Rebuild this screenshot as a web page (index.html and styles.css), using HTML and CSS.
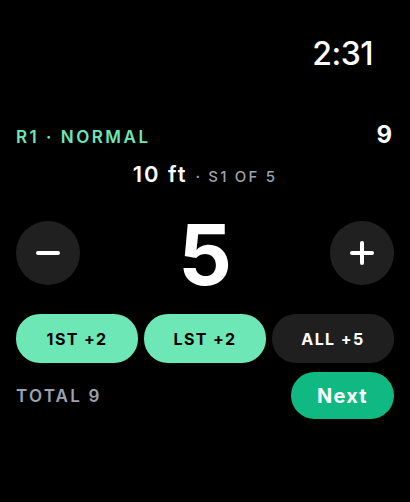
FILE: index.html
```html
<!DOCTYPE html>
<html lang="en">
<head>
<meta charset="utf-8">
<title>Round</title>
<link rel="stylesheet" href="styles.css">
</head>
<body>
<main class="screen">
  <header class="status">
    <span class="time">2:31</span>
  </header>

  <section class="round-row">
    <span class="round-label">R1 · NORMAL</span>
    <span class="round-score">9</span>
  </section>

  <section class="target-row">
    <span class="distance">10 ft</span>
    <span class="set-info"><span class="sep">·</span>S1 OF 5</span>
  </section>

  <section class="stepper">
    <button class="step-btn" aria-label="Decrease">
      <svg width="24" height="24" viewBox="0 0 24 24"><line x1="2" y1="12" x2="22" y2="12" stroke="#fff" stroke-width="4" stroke-linecap="round"/></svg>
    </button>
    <span class="count">5</span>
    <button class="step-btn" aria-label="Increase">
      <svg width="24" height="24" viewBox="0 0 24 24"><line x1="2" y1="12" x2="22" y2="12" stroke="#fff" stroke-width="4" stroke-linecap="round"/><line x1="12" y1="2" x2="12" y2="22" stroke="#fff" stroke-width="4" stroke-linecap="round"/></svg>
    </button>
  </section>

  <section class="chips">
    <button class="chip chip-on">1ST +2</button>
    <button class="chip chip-on">LST +2</button>
    <button class="chip chip-off">ALL +5</button>
  </section>

  <footer class="bottom-row">
    <span class="total">TOTAL 9</span>
    <button class="next-btn">Next</button>
  </footer>
</main>
</body>
</html>
```

FILE: styles.css
```css
* { box-sizing: border-box; }

html, body {
  margin: 0;
  padding: 0;
  background: #000;
}

body {
  font-family: Inter, "Noto Sans", "Liberation Sans", sans-serif;
  color: #fff;
  width: 410px;
  height: 502px;
  overflow: hidden;
}

.screen {
  padding: 38px 16px 0;
  display: flex;
  flex-direction: column;
}

.status {
  display: flex;
  justify-content: flex-end;
  padding-right: 21px;
}

.time {
  font-size: 32px;
  line-height: 32px;
  font-weight: 500;
  letter-spacing: -0.5px;
}

.round-row {
  margin-top: 53px;
  display: flex;
  justify-content: space-between;
  align-items: baseline;
}

.round-label {
  font-size: 17px;
  line-height: 24px;
  font-weight: 600;
  letter-spacing: 2.5px;
  color: #6ee7b7;
}

.round-score {
  font-size: 24px;
  line-height: 24px;
  font-weight: 700;
  padding-right: 2px;
}

.target-row {
  margin-top: 13px;
  display: flex;
  justify-content: center;
  align-items: baseline;
}

.distance {
  font-size: 22px;
  line-height: 24px;
  font-weight: 600;
  letter-spacing: 2px;
}

.set-info {
  font-size: 15px;
  line-height: 24px;
  font-weight: 500;
  letter-spacing: 2.2px;
  color: #9ca3af;
  margin-left: 8px;
}

.sep {
  margin-right: 6px;
}

.stepper {
  margin-top: 32px;
  display: flex;
  justify-content: space-between;
  align-items: center;
  height: 64px;
}

.step-btn {
  width: 64px;
  height: 64px;
  border-radius: 50%;
  border: 0;
  padding: 0;
  background: #202020;
  display: flex;
  align-items: center;
  justify-content: center;
}

.count {
  font-size: 84px;
  line-height: 64px;
  font-weight: 700;
  padding-top: 4px;
}

.chips {
  margin-top: 29px;
  display: grid;
  grid-template-columns: repeat(3, 1fr);
  gap: 6px;
}

.chip {
  height: 49px;
  border: 0;
  border-radius: 24px;
  font-family: inherit;
  font-size: 16px;
  font-weight: 700;
  letter-spacing: 1.4px;
  padding: 0;
}

.chip-on {
  background: #6ee7b7;
  color: #000;
}

.chip-off {
  background: #1f1f1f;
  color: #fff;
}

.bottom-row {
  margin-top: 9px;
  display: flex;
  justify-content: space-between;
  align-items: center;
}

.total {
  font-size: 17px;
  font-weight: 600;
  letter-spacing: 2.2px;
  color: #9ca3af;
}

.next-btn {
  width: 103px;
  height: 47px;
  border: 0;
  border-radius: 24px;
  background: #10b981;
  color: #fff;
  font-family: inherit;
  font-size: 20px;
  font-weight: 700;
  letter-spacing: 1.2px;
  padding: 0;
}
```
